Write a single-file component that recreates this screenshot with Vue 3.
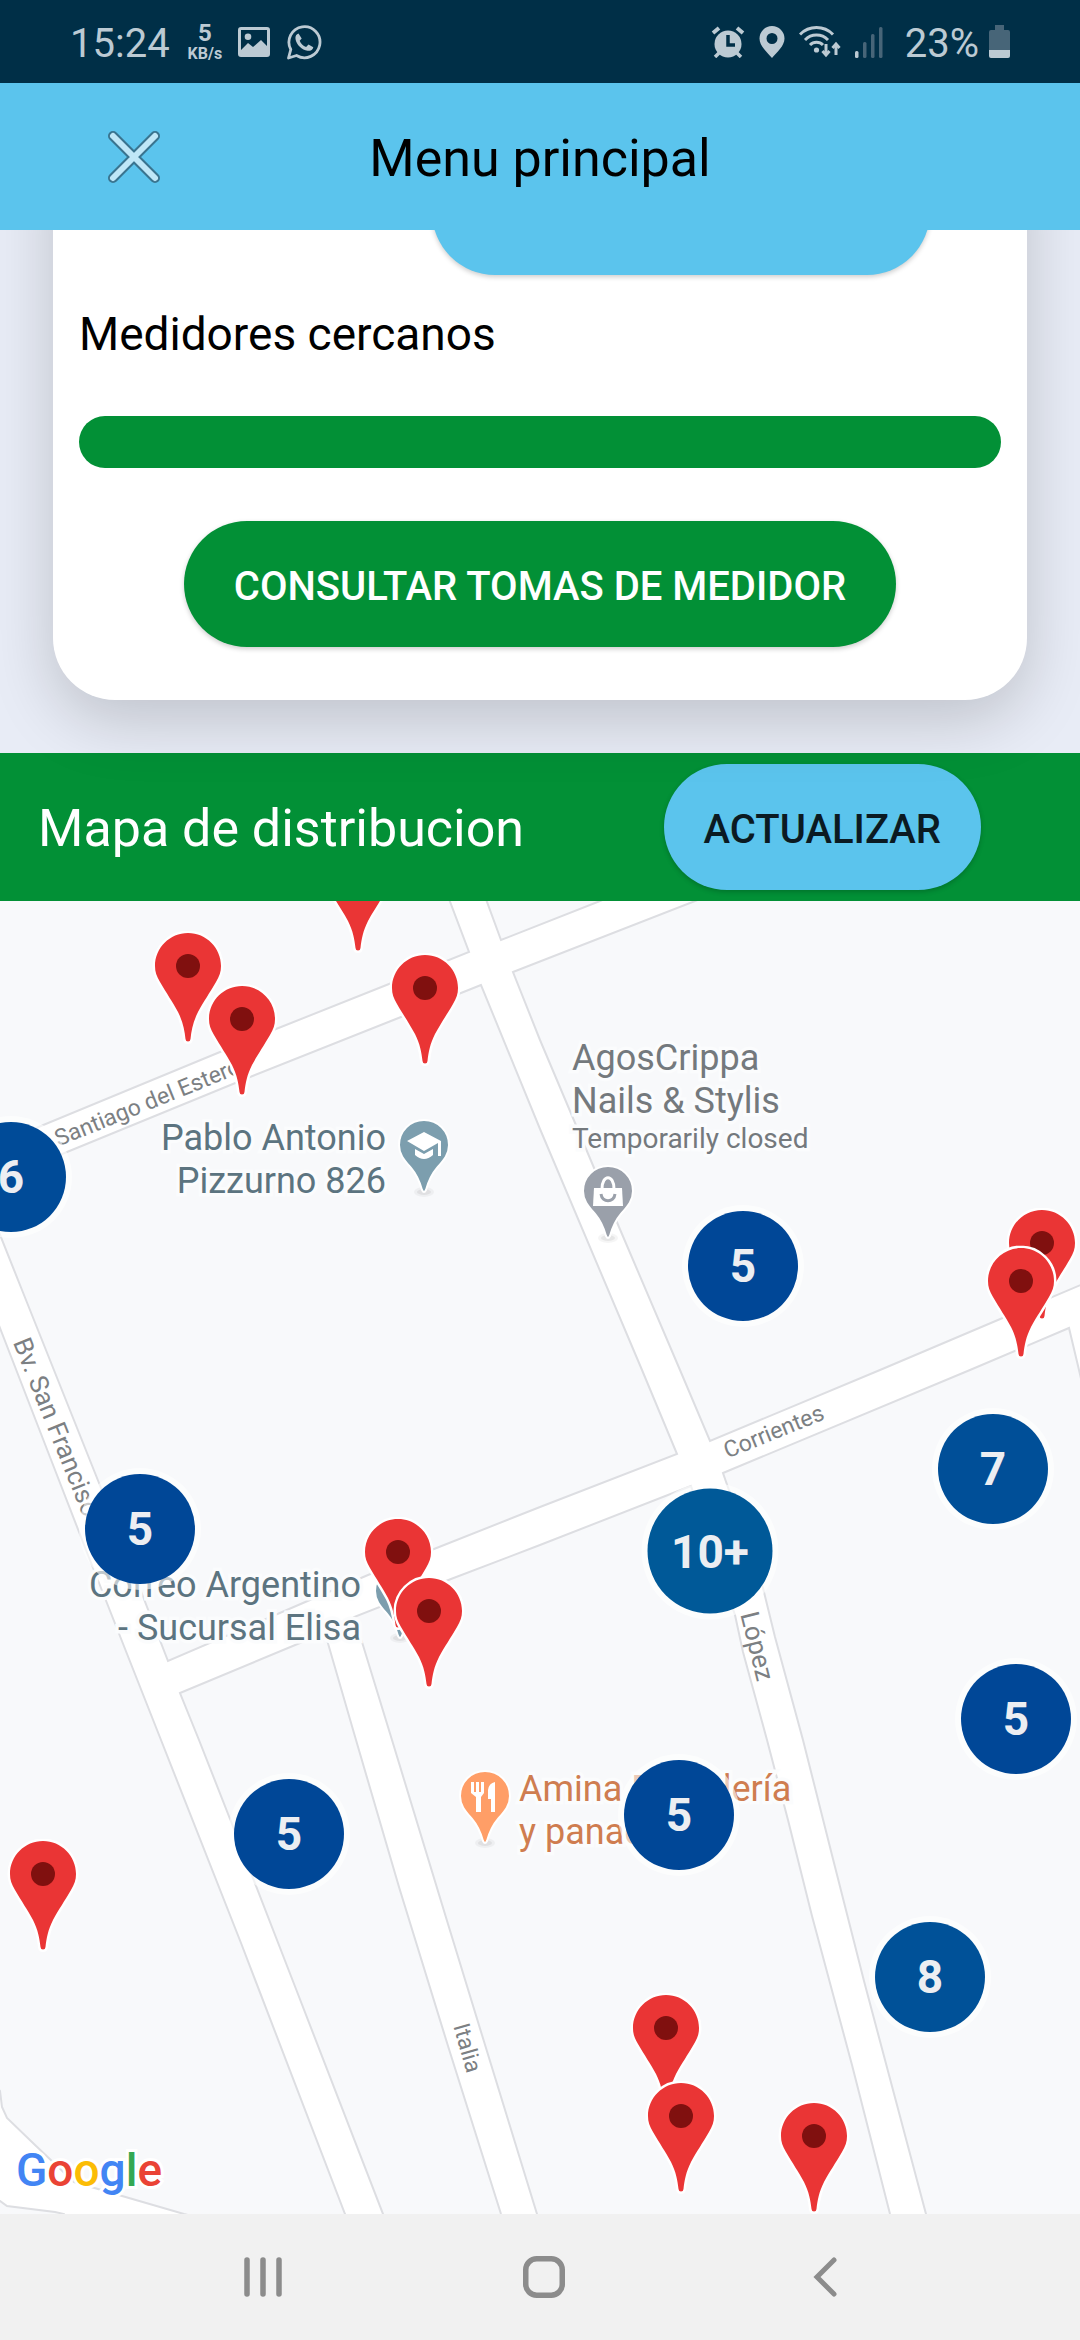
<script setup>
import { ref } from 'vue';

// Taille de base de la carte, les positions sont converties en %
const MAP_W = 1080;
const MAP_H = 1313;

// --- Manzanas (blocks) ---
const blocks = [
  '-10,-10 446,-10 469,51 389,83 276,128 220,151 -10,246',
  '483,-10 501,39 600,0 625,-10',
  '513,71 695,0 720,-10 1090,-10 1090,380 1005,416 880,469 710,540 680,469 619,326 540,139',
  '481,84 401,116 250,176 67,251 -19,286 22,389 99,582 168,760 296,705 368,674 434,648 540,606 677,553 642,469 540,228',
  '723,572 970,469 1069,427 1079,469 1100,560 1100,1330 930,1330 926,1313 864,1080 833,958 803,839 775,736 763,687',
  '691,585 540,644 451,678 354,716 362,741 392,839 448,1023 482,1134 537,1313 542,1330 895,1330 890,1313 852,1164 812,1015 788,919 767,839 743,751 735,714',
  '180,792 300,742 325,732 356,839 399,986 448,1145 501,1313 507,1330 390,1330 383,1313 296,1088 232,923 199,839',
  '-10,402 0,427 55,569 86,649 161,839 241,1042 345,1313 352,1330 250,1330 184,1313 74,1281 34,1243 7,1217 2,1206 0,1190 -10,1180',
  '-10,1298 0,1300 7,1305 55,1311 64,1313 70,1330 -10,1330'
];

const streets = [
  { name: 'Santiago del Estero', x: 56, y: 239, angle: -22 },
  { name: 'Corrientes', x: 725, y: 551, angle: -22 },
  { name: 'Bv. San Francisco', x: 21, y: 438, angle: 68, big: true },
  { name: 'López', x: 749, y: 711, angle: 76, big: true },
  { name: 'Italia', x: 460, y: 1123, angle: 74 }
];

const places = [
  { id: 'school', lines: ['Pablo Antonio', 'Pizzurno 826'], x: 386, y: 216, right: true, px: 424, py: 219, color: '#7c9eae' },
  { id: 'shop', lines: ['AgosCrippa', 'Nails & Stylis'], note: 'Temporarily closed', x: 572, y: 136, px: 608, py: 265, color: '#9aa0aa' },
  { id: 'post', lines: ['Correo Argentino', '- Sucursal Elisa'], x: 361, y: 663, right: true, px: 400, py: 665, color: '#7c9eae' },
  { id: 'food', lines: ['Amina Pastelería', 'y panadería'], x: 519, y: 867, px: 485, py: 870, color: '#ff9e67' }
];

const pins = [
  { x: 358, y: -59 },
  { x: 188, y: 32 },
  { x: 425, y: 54 },
  { x: 242, y: 85 },
  { x: 1042, y: 309 },
  { x: 1021, y: 347 },
  { x: 398, y: 618 },
  { x: 429, y: 677 },
  { x: 43, y: 940 },
  { x: 666, y: 1094 },
  { x: 681, y: 1182 },
  { x: 814, y: 1202 }
];

const clusters = [
  { count: '6', x: 11, y: 276, color: '#004b98' },
  { count: '5', x: 743, y: 365, color: '#004797' },
  { count: '7', x: 993, y: 568, color: '#004f98' },
  { count: '5', x: 140, y: 628, color: '#004797' },
  { count: '10+', x: 710, y: 650, color: '#005998', big: true },
  { count: '5', x: 1016, y: 818, color: '#004797' },
  { count: '5', x: 679, y: 914, color: '#004797' },
  { count: '5', x: 289, y: 933, color: '#004797' },
  { count: '8', x: 930, y: 1076, color: '#005198' }
];

const logo = [
  ['G', '#4285f4'],
  ['o', '#ea4335'],
  ['o', '#fbbc05'],
  ['g', '#4285f4'],
  ['l', '#34a853'],
  ['e', '#ea4335']
];

const selected = ref(null);

// --- Utils ---
const place = (x, y) => ({
  left: `${(x / MAP_W) * 100}%`,
  top: `${(y / MAP_H) * 100}%`
});
</script>

<template>
  <div class="screen">
    <div class="status-bar">
      <div class="status-group">
        <span class="status-text">15:24</span>
        <span class="net-speed"><b>5</b><small>KB/s</small></span>
        <svg width="32" height="30" viewBox="0 0 32 30">
          <path fill="currentColor" fill-rule="evenodd" d="M3 0h26a3 3 0 0 1 3 3v24a3 3 0 0 1-3 3H3a3 3 0 0 1-3-3V3a3 3 0 0 1 3-3zM3 3v20l7-7 5 4 8-7 6 6V3zM10 6.500a3.300 3.300 0 1 1 0 6.600a3.300 3.300 0 0 1 0-6.600z" />
        </svg>
        <svg width="36" height="36" viewBox="0 0 36 36">
          <path fill="none" stroke="currentColor" stroke-width="2.800" stroke-linejoin="round" d="M2.500 34l2.300-8.500A15.500 15.500 0 1 1 10.500 31.500z" />
          <path fill="currentColor" d="M12.500 9.500c-2 .500-3.500 2.500-3 5.500c1 6 6.500 11 12 11.800c3 .300 5.500-1.200 5.800-3.600l-4.800-2.700l-2.400 2.400c-3-1-5.400-3.500-6.400-6.200l2-2.200z" />
        </svg>
      </div>
      <div class="status-group right">
        <svg width="34" height="32" viewBox="0 0 34 32">
          <circle cx="17" cy="18" r="13.500" fill="currentColor" />
          <path d="M2 7l6-5M32 7l-6-5" stroke="currentColor" stroke-width="4" />
          <path d="M8 27l-4 4M26 27l4 4" stroke="currentColor" stroke-width="3.500" />
          <path d="M17 9v10h7" fill="none" stroke="#002f47" stroke-width="3.500" />
        </svg>
        <svg width="26" height="32" viewBox="0 0 26 32">
          <path fill="currentColor" fill-rule="evenodd" d="M13 0a12.500 12.500 0 0 1 12.500 12.500C25.500 20 18 26 13 32C8 26 .500 20 .500 12.500A12.500 12.500 0 0 1 13 0zM13 7a5.500 5.500 0 1 0 0 11a5.500 5.500 0 0 0 0-11z" />
        </svg>
        <svg width="42" height="33" viewBox="0 0 42 33">
          <g fill="none" stroke="currentColor" stroke-width="3">
            <path d="M1 9.500a23 23 0 0 1 33 0M6 15a16 16 0 0 1 23 0M11 20a9 9 0 0 1 13 0" />
            <path d="M27 19v10M37 30V19" />
            <path d="M23.500 26l3.500 4l3.500-4M33.500 23l3.500-4l3.500 4" />
          </g>
          <circle cx="17.500" cy="25" r="2.600" fill="currentColor" />
        </svg>
        <svg width="28" height="32" viewBox="0 0 28 32">
          <rect x="0" y="25" width="3.500" height="7" rx="1.500" fill="currentColor" />
          <g fill="#476578">
            <rect x="8" y="16" width="3.500" height="16" rx="1.500" />
            <rect x="16" y="8" width="3.500" height="24" rx="1.500" />
            <rect x="24" y="1" width="3.500" height="31" rx="1.500" />
          </g>
        </svg>
        <span class="status-text percent">23%</span>
        <svg width="21" height="33" viewBox="0 0 21 33">
          <path fill="#476578" d="M6 0h9v5h4a2 2 0 0 1 2 2v18H0V7a2 2 0 0 1 2-2h4z" />
          <path fill="currentColor" d="M0 25h21v6a2 2 0 0 1-2 2H2a2 2 0 0 1-2-2z" />
        </svg>
      </div>
    </div>

    <header class="app-header">
      <button type="button" class="btn-close" aria-label="Cerrar">
        <svg width="54" height="54" viewBox="0 0 54 54">
          <path d="M6 6l42 42M48 6L6 48" stroke="#39748f" stroke-width="10" stroke-linecap="round" />
          <path d="M6 6l42 42M48 6L6 48" stroke="#bfe7f7" stroke-width="6" stroke-linecap="round" />
        </svg>
      </button>
      <h1>Menu principal</h1>
    </header>

    <section class="card-area">
      <div class="card">
        <button type="button" class="btn btn-blue btn-top" aria-label="Buscar"></button>
        <h2>Medidores cercanos</h2>
        <div class="green-bar"></div>
        <button type="button" class="btn btn-green">CONSULTAR TOMAS DE MEDIDOR</button>
      </div>
    </section>

    <div class="map-header">
      <h2>Mapa de distribucion</h2>
      <button type="button" class="btn btn-blue">ACTUALIZAR</button>
    </div>

    <div class="map">
      <svg class="map-base" :viewBox="`0 0 ${MAP_W} ${MAP_H}`" preserveAspectRatio="none">
        <polygon v-for="(points, i) in blocks" :key="i" :points="points" />
      </svg>

      <span
        v-for="s in streets"
        :key="s.name"
        :class="['street', { 'street-big': s.big }]"
        :style="{ ...place(s.x, s.y), transform: `translateY(-50%) rotate(${s.angle}deg)` }"
      >{{ s.name }}</span>

      <template v-for="p in places" :key="p.id">
        <svg class="poi-pin" :style="place(p.px, p.py)" width="60" height="82" viewBox="-5 -3 60 82">
          <ellipse cx="25" cy="72" rx="10" ry="5" fill="#000" opacity=".04" />
          <ellipse cx="25" cy="72" rx="7" ry="3" fill="#000" opacity=".06" />
          <path :fill="p.color" stroke="#fff" stroke-width="2" d="M25 0C11 0 0 11 0 25C0 35 6 41 12 48C18 55 21 63 23 70Q25 74 27 70C29 63 32 55 38 48C44 41 50 35 50 25C50 11 39 0 25 0Z" />
          <g v-if="p.id === 'school'" fill="#fff">
            <path d="M25 12L8 21l17 10l14-8v13h3V21z" />
            <path d="M16 29v6q9 8 18 0v-6l-9 5z" />
          </g>
          <g v-else-if="p.id === 'shop'">
            <path d="M11 22h28l1 18H10z" fill="#fff" />
            <path d="M19 23c0-15 12-15 12 0" fill="none" stroke="#fff" stroke-width="3" />
            <path d="M18 28c1 9 13 9 14 0" fill="none" stroke="#9aa0aa" stroke-width="3" />
          </g>
          <g v-else-if="p.id === 'food'" fill="#fff">
            <path d="M11 11h3v10h2V11h3v10h2V11h3v11l-3 4v15h-5V26l-5-4z" />
            <path d="M35 11v30h-4V28h-3V19q1-7 7-8z" />
          </g>
        </svg>
        <div :class="['poi-label', p.id, { right: p.right }]" :style="place(p.x, p.y)">
          <div v-for="line in p.lines" :key="line">{{ line }}</div>
          <div v-if="p.note" class="note">{{ p.note }}</div>
        </div>
      </template>

      <span class="google">
        <span v-for="(l, i) in logo" :key="i" :style="{ color: l[1] }">{{ l[0] }}</span>
      </span>

      <button
        v-for="(pin, i) in pins"
        :key="'pin' + i"
        type="button"
        class="pin"
        :style="place(pin.x, pin.y)"
        :aria-label="`Medidor ${i + 1}`"
        @click="selected = i"
      >
        <svg width="72" height="114" viewBox="-3 -3 72 114">
          <path fill="#ea3535" stroke="#fff" stroke-width="5" paint-order="stroke" stroke-linejoin="round" d="M33 0C14.800 0 0 14.800 0 33C0 39 1.500 43 5 49C12 61 17 68 23 79C28 89 29.500 97 30.500 106Q30.700 108.500 33 108.500Q35.300 108.500 35.500 106C36.500 97 38 89 43 79C49 68 54 61 61 49C64.500 43 66 39 66 33C66 14.800 51.200 0 33 0Z" />
          <circle cx="33" cy="33" r="12" fill="#80100f" />
        </svg>
      </button>

      <button
        v-for="(c, i) in clusters"
        :key="'cluster' + i"
        type="button"
        :class="['cluster', { 'cluster-big': c.big }]"
        :style="{ ...place(c.x, c.y), backgroundColor: c.color }"
      >{{ c.count }}</button>
    </div>

    <nav class="nav-bar">
      <button type="button" aria-label="Recientes">
        <svg width="38" height="40" viewBox="0 0 38 40">
          <path d="M3 3v34M19 3v34M35 3v34" stroke="#8c8c8c" stroke-width="5.500" stroke-linecap="round" />
        </svg>
      </button>
      <button type="button" aria-label="Inicio">
        <svg width="42" height="42" viewBox="0 0 42 42">
          <rect x="2.750" y="2.750" width="36.500" height="36.500" rx="11" fill="none" stroke="#8c8c8c" stroke-width="5.500" />
        </svg>
      </button>
      <button type="button" aria-label="Atrás">
        <svg width="24" height="40" viewBox="0 0 24 40">
          <path d="M21 3L4 20l17 17" fill="none" stroke="#8c8c8c" stroke-width="5" stroke-linecap="round" />
        </svg>
      </button>
    </nav>
  </div>
</template>

<style>
body {
  margin: 0;
}
</style>

<style scoped>
.screen {
  display: flex;
  flex-direction: column;
  min-height: 100vh;
  overflow: hidden;
  background: #e8ecf6;
  font-family: Roboto, "Noto Sans", sans-serif;
}

h1,
h2 {
  margin: 0;
  font-weight: 400;
}

button {
  border: none;
  padding: 0;
  background: none;
  font-family: inherit;
  cursor: pointer;
}

svg {
  display: block;
  flex-shrink: 0;
}

/* --- Barra de estado --- */
.status-bar {
  position: relative;
  z-index: 2;
  display: flex;
  justify-content: space-between;
  align-items: center;
  height: 83px;
  padding: 0 70px;
  background: #002f47;
  color: #bccad3;
}

.status-group {
  display: flex;
  align-items: center;
  gap: 16px;
}

.status-group.right {
  gap: 14px;
}

.status-text {
  padding-top: 4px;
  font-size: 40px;
  line-height: 48px;
}

.percent {
  margin: 0 -4px 0 8px;
}

.net-speed {
  display: flex;
  flex-direction: column;
  align-items: center;
  margin-left: 2px;
}

.net-speed b {
  font-size: 24px;
  line-height: 24px;
}

.net-speed small {
  font-size: 16px;
  font-weight: 700;
  line-height: 18px;
}

/* --- Cabecera --- */
.app-header {
  position: relative;
  z-index: 2;
  display: grid;
  grid-template-columns: 1fr auto 1fr;
  align-items: center;
  height: 147px;
  background: #5bc4ed;
}

.app-header h1 {
  padding-top: 4px;
  font-size: 52px;
  line-height: 60px;
  color: #000;
}

.btn-close {
  justify-self: start;
  margin-left: 107px;
}

/* --- Tarjeta --- */
.card-area {
  padding: 0 53px 53px;
}

.card {
  position: relative;
  display: flex;
  flex-direction: column;
  align-items: center;
  margin-top: -120px;
  padding: 39px 26px 53px;
  border-radius: 62px;
  background: #fff;
  box-shadow: 0 20px 64px rgba(0, 0, 0, 0.18);
}

.card h2 {
  align-self: stretch;
  padding: 32px 0 55px;
  font-size: 46px;
  line-height: 54px;
  color: #000;
}

.green-bar {
  align-self: stretch;
  height: 52px;
  margin-bottom: 53px;
  border-radius: 26px;
  background: #029036;
}

.btn {
  height: 126px;
  border-radius: 63px;
  font-size: 40px;
  font-weight: 500;
  box-shadow: 0 2px 5px rgba(0, 0, 0, 0.2);
}

.btn-green {
  padding: 4px 50px 0;
  background: #029036;
  color: #fff;
}

.btn-blue {
  padding: 4px 40px 0;
  background: #5bc4ed;
  color: #0b1a22;
}

.btn-top {
  align-self: flex-end;
  width: 54%;
  margin-right: 71px;
}

/* --- Mapa --- */
.map-header {
  display: flex;
  justify-content: space-between;
  align-items: center;
  height: 148px;
  padding: 0 99px 0 38px;
  background: #029036;
}

.map-header h2 {
  padding-top: 4px;
  font-size: 52px;
  line-height: 60px;
  color: #fff;
}

.map {
  position: relative;
  z-index: 1;
  flex: 1;
  min-height: 600px;
  overflow: hidden;
  background: #fff;
}

.map-base {
  position: absolute;
  width: 100%;
  height: 100%;
}

.map-base polygon {
  fill: #f8f9fb;
  stroke: #dddee2;
  stroke-width: 2;
}

.street {
  position: absolute;
  transform-origin: left center;
  font-size: 23px;
  line-height: 24px;
  color: #7c8083;
  white-space: nowrap;
}

.street-big {
  font-size: 26px;
}

.poi-pin {
  position: absolute;
  margin: -3px 0 0 -30px;
}

.poi-label {
  position: absolute;
  font-size: 36px;
  line-height: 43px;
  white-space: nowrap;
  color: #5c7480;
  -webkit-text-stroke: 7px #fbfcfd;
  paint-order: stroke fill;
}

.poi-label.right {
  transform: translateX(-100%);
  text-align: right;
}

.poi-label.shop {
  color: #74797d;
}

.poi-label.food {
  color: #cf7d50;
}

.note {
  font-size: 28px;
  line-height: 32px;
}

.google {
  position: absolute;
  left: 16px;
  bottom: 16px;
  display: flex;
  font-size: 46px;
  font-weight: 500;
  line-height: 56px;
  -webkit-text-stroke: 6px #fff;
  paint-order: stroke fill;
}

.pin {
  position: absolute;
  margin: -3px 0 0 -36px;
}

.cluster {
  position: absolute;
  width: 110px;
  height: 110px;
  border-radius: 50%;
  transform: translate(-50%, -50%);
  color: #eceef2;
  font-size: 46px;
  font-weight: 700;
  box-shadow: 0 0 0 6px rgba(255, 255, 255, 0.6);
}

.cluster-big {
  width: 125px;
  height: 125px;
}

/* --- Navegación --- */
.nav-bar {
  display: flex;
  height: 126px;
  padding: 0 115px 0 123px;
  background: #f1f1f1;
}

.nav-bar button {
  display: flex;
  flex: 1;
  align-items: center;
  justify-content: center;
}
</style>
